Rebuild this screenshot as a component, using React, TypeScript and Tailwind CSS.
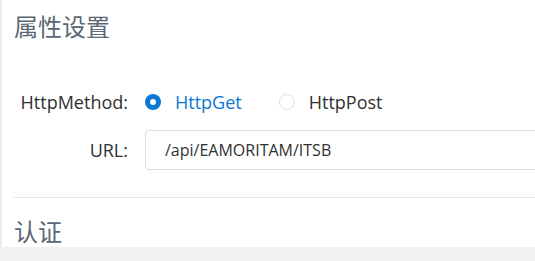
import { useState } from 'react'

const font = { fontFamily: '"Open Sans", "Noto Sans CJK SC", sans-serif' }

function Radio({ label, checked, onClick }: { label: string; checked: boolean; onClick: () => void }) {
  return (
    <label className="flex cursor-pointer items-center gap-[14px]" onClick={onClick}>
      {checked ? (
        <span className="flex h-4 w-4 items-center justify-center rounded-full bg-[#0b78d3]">
          <span className="h-[6px] w-[6px] rounded-full bg-white" />
        </span>
      ) : (
        <span className="h-4 w-4 rounded-full border border-[#dcdfe6] bg-white" />
      )}
      <span className={checked ? 'text-[#0b78d3]' : 'text-[#303133]'}>{label}</span>
    </label>
  )
}

export default function App() {
  const [method, setMethod] = useState('get')

  return (
    <div className="h-[261px] w-[535px] overflow-hidden bg-[#f2f2f2]" style={font}>
      <div className="h-[247px] overflow-hidden border-l-2 border-[#ececec] bg-white pl-[12px]">
        <h2 className="pt-[11px] text-[24px] leading-[32px] text-[#5b6774]">属性设置</h2>

        <div className="mt-[45px] flex flex-col gap-[14px] text-[18px] leading-[24px]">
          <div className="flex h-[28px] items-center">
            <div className="w-[116px] shrink-0 pr-[2px] text-right text-[#303133]">HttpMethod:</div>
            <div className="ml-[15px] flex items-center gap-[37px]">
              <Radio label="HttpGet" checked={method === 'get'} onClick={() => setMethod('get')} />
              <Radio label="HttpPost" checked={method === 'post'} onClick={() => setMethod('post')} />
            </div>
          </div>
          <div className="flex h-[40px] items-center">
            <div className="w-[116px] shrink-0 pr-[2px] text-right text-[#303133]">URL:</div>
            <input
              className="ml-[15px] h-[40px] w-[420px] shrink-0 rounded-[4px] border border-[#dcdfe6] px-[19px] text-[16px] text-[#303133] outline-none"
              defaultValue="/api/EAMORITAM/ITSB"
            />
          </div>
        </div>

        <div className="mt-[27px] border-t border-[#e6e6e6]" />
        <h2 className="pt-[18px] text-[24px] leading-[32px] text-[#5b6774]">认证</h2>
      </div>
    </div>
  )
}
